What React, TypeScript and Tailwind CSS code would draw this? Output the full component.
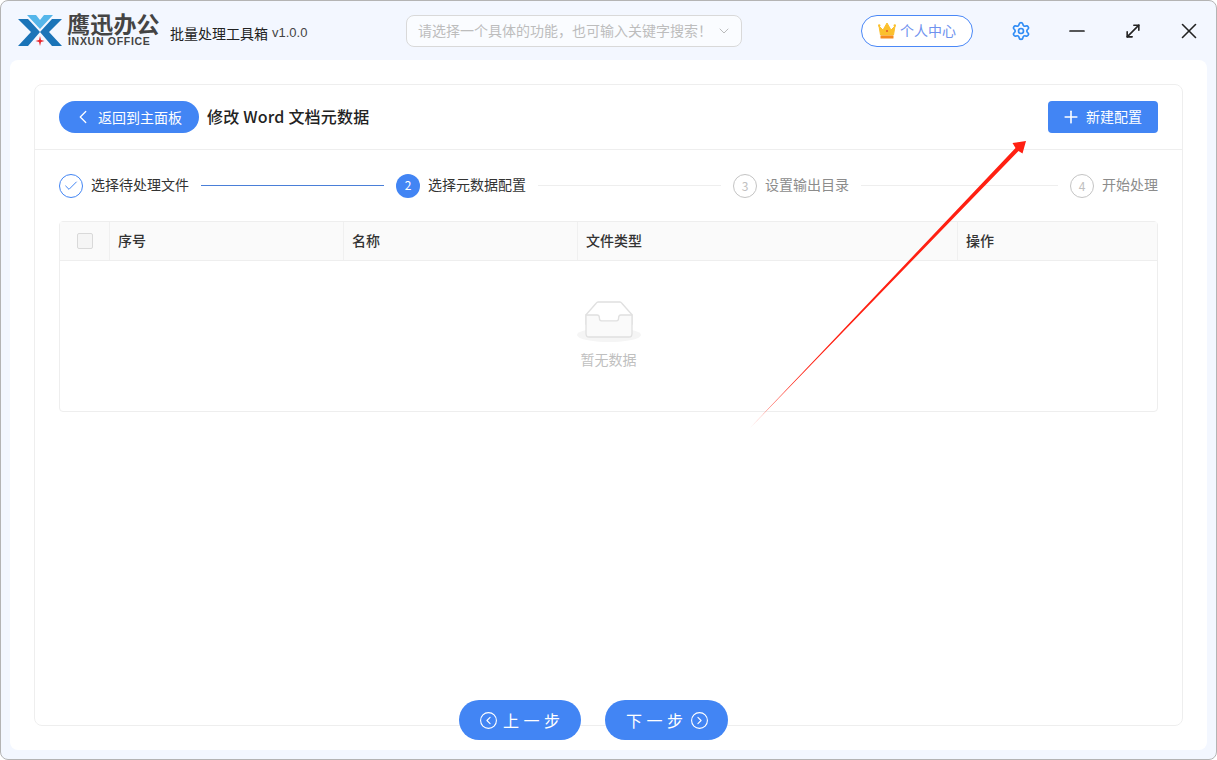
import { Check, ChevronLeft, ChevronDown, CircleChevronLeft, CircleChevronRight, Minus, MoveDiagonal, Plus, Settings, X } from "lucide-react";

const font = { fontFamily: '"Noto Sans CJK SC", "Liberation Sans", sans-serif' };

function Logo() {
  return (
    <svg width="44" height="32" viewBox="18 14 44 32" className="shrink-0">
      <polygon points="27,14 36,14 40,19 44,14 53,14 40,28" fill="#55b6ea" />
      <polygon points="18,18 28,18 40,31 28,45 18,45 31,31" fill="#1a74b8" />
      <polygon points="62,18 52,18 40,31 52,45 62,45 49,31" fill="#1a74b8" />
      <polygon points="40,35 41,39 44.5,40 41,41 40,45 39,41 35.5,40 39,39" fill="#e8262d" />
    </svg>
  );
}

function Crown() {
  return (
    <svg width="18" height="17" viewBox="0 0 18 17" className="shrink-0">
      <path d="M1 4 L5 8 L9 1 L13 8 L17 4 L15.5 13 H2.5 Z" fill="#fbc02d" stroke="#fbc02d" strokeLinejoin="round" />
      <circle cx="1.2" cy="3.5" r="1.2" fill="#fbc02d" />
      <circle cx="16.8" cy="3.5" r="1.2" fill="#fbc02d" />
      <rect x="2.5" y="13.5" width="13" height="3" rx="0.5" fill="#f58a1f" />
      <circle cx="9" cy="9" r="1" fill="#e2542a" />
    </svg>
  );
}

function EmptyIcon() {
  return (
    <svg width="64" height="41" viewBox="0 0 64 41">
      <g transform="translate(0 1)" fill="none" fillRule="evenodd">
        <ellipse fill="#f5f5f5" cx="32" cy="33" rx="32" ry="7" />
        <g fillRule="nonzero" stroke="#e0e0e0" strokeWidth="1.3">
          <path d="M55 12.76L44.854 1.258C44.367.474 43.656 0 42.907 0H21.093c-.749 0-1.46.474-1.947 1.257L9 12.761V22h46v-9.24z" />
          <path
            d="M41.613 15.931c0-1.605.994-2.93 2.227-2.931H55v18.137C55 33.26 53.68 35 52.05 35h-40.1C10.32 35 9 33.259 9 31.137V13h11.16c1.233 0 2.227 1.323 2.227 2.928v.022c0 1.605 1.005 2.901 2.237 2.901h14.752c1.232 0 2.237-1.308 2.237-2.913v-.007z"
            fill="#fafafa"
          />
        </g>
      </g>
    </svg>
  );
}

function Step({ n, label, state }: { n: number; label: string; state: "done" | "active" | "todo" }) {
  return (
    <div className="flex shrink-0 items-center gap-2">
      {state === "done" && (
        <span className="flex h-6 w-6 items-center justify-center rounded-full border border-[#4285f4] text-[#4285f4]">
          <Check size={16} strokeWidth={1.5} />
        </span>
      )}
      {state === "active" && (
        <span className="flex h-6 w-6 items-center justify-center rounded-full bg-[#4285f4] pb-[1px] text-xs text-white">{n}</span>
      )}
      {state === "todo" && (
        <span className="flex h-6 w-6 items-center justify-center rounded-full border border-[#c4c4c4] text-xs text-[#c0c0c0]">{n}</span>
      )}
      <span className={state === "todo" ? "mb-[4px] text-sm leading-6 text-[#8c8c8c]" : "mb-[4px] text-sm leading-6 text-[#333]"}>{label}</span>
    </div>
  );
}

export default function App() {
  return (
    <div style={font} className="relative flex h-[760px] w-[1217px] flex-col overflow-hidden rounded-lg border border-[#b4b4b4] bg-[#f3f7ff]">
      {/* title bar */}
      <div className="flex h-[59px] shrink-0 items-center">
        <div className="ml-[17px] flex items-center">
          <Logo />
          <div className="ml-[5px] flex w-[96px] flex-col pb-[3px]">
            <span className="text-[23px] leading-[23px] font-bold tracking-[0.2px] whitespace-nowrap text-[#444]">鹰迅办公</span>
            <span style={{ fontFamily: '"Liberation Sans", sans-serif' }} className="mt-[1px] ml-px text-[10.5px] leading-[10px] font-bold tracking-[0.7px] whitespace-nowrap text-[#444]">
              INXUN OFFICE
            </span>
          </div>
        </div>
        <div className="mt-[5px] ml-[7px] flex w-[236px] items-center text-sm whitespace-nowrap text-[#222]">
          <span>批量处理工具箱</span>
          <span style={{ fontFamily: '"Liberation Sans", sans-serif' }} className="ml-1 text-[13px] text-[#444]">v1.0.0</span>
        </div>
        <div className="flex h-8 w-[336px] items-center justify-between rounded-lg border border-[#d9d9d9] bg-white/60 pr-[9px] pl-[11px] text-sm whitespace-nowrap text-[#bdbdbd]">
          <span className="mb-[2px]">请选择一个具体的功能，也可输入关键字搜索！</span>
          <ChevronDown size={16} strokeWidth={1.2} className="text-[#aaa]" />
        </div>
        <div className="ml-[119px] flex h-8 w-[112px] items-center gap-[4px] rounded-full border border-[#4a88f7] bg-white pl-4 text-sm whitespace-nowrap text-[#6f92ee]">
          <Crown />
          <span className="mb-[2px]">个人中心</span>
        </div>
        <Settings size={20} strokeWidth={2} className="ml-[38px] text-[#2f8cf5]" />
        <Minus size={24} strokeWidth={1.7} className="ml-[34px] text-[#222]" />
        <MoveDiagonal size={20} strokeWidth={1.9} className="ml-[34px] text-[#222]" />
        <X size={26} strokeWidth={1.5} className="ml-[33px] text-[#222]" />
      </div>

      {/* main panel */}
      <div className="mx-[9px] flex h-[690px] shrink-0 flex-col rounded-lg bg-white px-6 pt-6">
        <div className="flex h-[642px] shrink-0 flex-col rounded-lg border border-[#eeeeee]">
          <div className="flex h-[65px] shrink-0 items-center justify-between border-b border-[#eeeeee] pr-6 pl-6">
            <div className="flex items-center gap-2">
              <button className="flex h-8 w-[140px] items-center rounded-full bg-[#4285f4] pl-[13px] text-sm text-white">
                <ChevronLeft size={22} strokeWidth={1.4} />
                <span className="mb-[1px] ml-[4px]">返回到主面板</span>
              </button>
              <h1 className="mb-[2px] text-base font-medium tracking-[0.2px] whitespace-nowrap text-[#222]">修改 Word 文档元数据</h1>
            </div>
            <button className="flex h-8 w-[110px] items-center justify-center gap-[5px] rounded-sm bg-[#4285f4] pr-[3px] text-sm text-white">
              <Plus size={20} strokeWidth={1.9} />
              <span className="mb-[2px]">新建配置</span>
            </button>
          </div>

          <div className="flex h-[71px] shrink-0 items-center gap-3 px-6">
            <Step n={1} label="选择待处理文件" state="done" />
            <div className="h-px w-[183px] bg-[#4a7fd8]" />
            <Step n={2} label="选择元数据配置" state="active" />
            <div className="h-px w-[183px] bg-[#eeeeee]" />
            <Step n={3} label="设置输出目录" state="todo" />
            <div className="h-px w-[197px] bg-[#eeeeee]" />
            <Step n={4} label="开始处理" state="todo" />
          </div>

          <div className="mx-6 flex h-[191px] flex-col rounded-sm border border-[#eeeeee]">
            <div className="flex h-[39px] shrink-0 items-center border-b border-[#eeeeee] bg-[#fafafa] text-sm font-medium text-[#333]">
              <div className="flex h-full w-[50px] items-center justify-center border-r border-[#f0f0f0]">
                <span className="h-4 w-4 rounded-[2px] border border-[#d9d9d9] bg-[#f5f5f5]" />
              </div>
              <div className="flex h-full w-[234px] items-center border-r border-[#f0f0f0] pb-[2px] pl-2">序号</div>
              <div className="flex h-full w-[234px] items-center border-r border-[#f0f0f0] pb-[2px] pl-2">名称</div>
              <div className="flex h-full w-[380px] items-center border-r border-[#f0f0f0] pb-[2px] pl-2">文件类型</div>
              <div className="flex h-full flex-1 items-center pb-[2px] pl-2">操作</div>
            </div>
            <div className="flex flex-1 flex-col items-center pt-[40px]">
              <EmptyIcon />
              <span className="mt-[6px] text-sm leading-[22px] text-[#bfbfbf]">暂无数据</span>
            </div>
          </div>
        </div>

        <div className="relative z-10 -mt-[26px] ml-[425px] flex h-10 shrink-0 gap-6">
          <button className="flex h-10 w-[122px] items-center rounded-full bg-[#4285f4] pl-[20px] text-base tracking-[4.5px] whitespace-nowrap text-white">
            <CircleChevronLeft size={19} strokeWidth={1.4} />
            <span className="mb-[1px] ml-[5px]">上一步</span>
          </button>
          <button className="flex h-10 w-[123px] items-center rounded-full bg-[#4285f4] pl-[21px] text-base tracking-[4.5px] whitespace-nowrap text-white">
            <span className="mb-[1px]">下一步</span>
            <CircleChevronRight size={19} strokeWidth={1.4} className="ml-[2px]" />
          </button>
        </div>
      </div>

      {/* red annotation arrow drawn over the screenshot */}
      <svg width="1217" height="760" viewBox="0 0 1217 760" className="pointer-events-none absolute -top-px -left-px z-20">
        <polygon points="750,428 1015.5,148 1012.5,143 1026,141 1022.5,153.5 1018.5,151" fill="#ff2012" />
      </svg>
    </div>
  );
}
